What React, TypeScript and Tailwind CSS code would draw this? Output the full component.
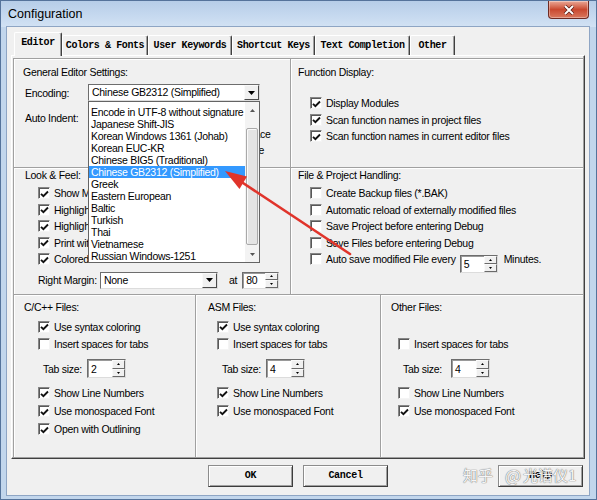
import clsx from "clsx";
import type { ReactNode } from "react";

const ENCODINGS = [
  "Encode in UTF-8 without signature",
  "Japanese Shift-JIS",
  "Korean Windows 1361 (Johab)",
  "Korean EUC-KR",
  "Chinese BIG5 (Traditional)",
  "Chinese GB2312 (Simplified)",
  "Greek",
  "Eastern European",
  "Baltic",
  "Turkish",
  "Thai",
  "Vietnamese",
  "Russian Windows-1251",
];

const TABS = [
  { name: "Editor", w: "w-[48px]" },
  { name: "Colors & Fonts", w: "w-[86px]" },
  { name: "User Keywords", w: "w-[84px]" },
  { name: "Shortcut Keys", w: "w-[83px]" },
  { name: "Text Completion", w: "w-[95px]" },
  { name: "Other", w: "w-[45px]" },
];

function Box({ checked }: { checked?: boolean }) {
  return (
    <span className="flex h-[12px] w-[12px] shrink-0 items-center justify-center border border-t-[#868686] border-l-[#868686] border-r-[#f4f4f4] border-b-[#f4f4f4] bg-white shadow-[inset_1px_1px_0_#585858]">
      {checked && (
        <svg width="9" height="8" viewBox="0 0 9 8" className="ml-[1px] mt-[1px]">
          <path d="M1 3.8 L3.4 6.2 L8 1.5" fill="none" stroke="#111" strokeWidth="1.9" />
        </svg>
      )}
    </span>
  );
}

function Check({
  label,
  checked,
  className,
  children,
}: {
  label: string;
  checked?: boolean;
  className?: string;
  children?: ReactNode;
}) {
  return (
    <div className={clsx("flex items-center", className)}>
      <Box checked={checked} />
      <span className="ml-[4px] whitespace-nowrap">{label}</span>
      {children}
    </div>
  );
}

function DownTri() {
  return (
    <svg width="7" height="4" viewBox="0 0 7 4">
      <path d="M0 0H7L3.5 4Z" fill="#000" />
    </svg>
  );
}

function Combo({ value, className, children }: { value: string; className?: string; children?: ReactNode }) {
  return (
    <div className={clsx("relative flex h-[17px] border border-t-[#6d6d6d] border-l-[#6d6d6d] border-r-[#dcdcdc] border-b-[#dcdcdc] bg-white", className)}>
      <span className="flex-1 overflow-hidden whitespace-nowrap pl-[3px] leading-[15px]">{value}</span>
      <span className="flex w-[15px] items-center justify-center border border-t-[#fafafa] border-l-[#fafafa] border-r-[#4a4a4a] border-b-[#4a4a4a] bg-[#f0f0f0]">
        <DownTri />
      </span>
      {children}
    </div>
  );
}

function Spin({ value, className }: { value: string; className?: string }) {
  return (
    <div className={clsx("flex border border-t-[#6d6d6d] border-l-[#6d6d6d] border-r-[#dcdcdc] border-b-[#dcdcdc] bg-white shadow-[inset_1px_1px_0_#9a9a9a]", className)}>
      <span className="flex flex-1 items-center pl-[3px]">{value}</span>
      <div className="flex w-[13px] flex-col">
        <span className="flex flex-1 items-center justify-center border border-t-[#fafafa] border-l-[#fafafa] border-r-[#6a6a6a] border-b-[#6a6a6a] bg-[#f0f0f0]">
          <svg width="3" height="2" viewBox="0 0 3 2">
            <path d="M0 2H3L1.5 0Z" fill="#000" />
          </svg>
        </span>
        <span className="flex flex-1 items-center justify-center border border-t-[#fafafa] border-l-[#fafafa] border-r-[#6a6a6a] border-b-[#6a6a6a] bg-[#f0f0f0]">
          <svg width="3" height="2" viewBox="0 0 3 2">
            <path d="M0 0H3L1.5 2Z" fill="#000" />
          </svg>
        </span>
      </div>
    </div>
  );
}

function EncodingList() {
  return (
    <div className="absolute left-[-1px] top-[16px] z-20 flex h-[162px] w-[172px] border border-[#646464] bg-white">
      <div className="flex-1 pt-[4px]">
        {ENCODINGS.map((e) => (
          <div
            key={e}
            className={clsx(
              "h-[12px] whitespace-nowrap pl-[2px] leading-[12px]",
              e === "Chinese GB2312 (Simplified)" && "bg-[#3399ff] text-white"
            )}
          >
            {e}
          </div>
        ))}
      </div>
      <div className="flex w-[14px] flex-col bg-[#f3f3f3]">
        <span className="flex h-[16px] items-center justify-center">
          <svg width="5" height="3" viewBox="0 0 5 3">
            <path d="M0 3H5L2.5 0Z" fill="#555" />
          </svg>
        </span>
        <div className="flex-1">
          <div className="mx-[1px] mt-[10px] h-[117px] rounded-[2px] border border-[#a9a9a9] bg-[#e4e4e4] shadow-[inset_1px_1px_0_#fafafa]" />
        </div>
        <span className="flex h-[16px] items-center justify-center">
          <svg width="5" height="3" viewBox="0 0 5 3">
            <path d="M0 0H5L2.5 3Z" fill="#555" />
          </svg>
        </span>
      </div>
    </div>
  );
}

function Button({ label, className }: { label: string; className?: string }) {
  return (
    <div
      className={clsx(
        "flex h-[22px] w-[85px] items-center justify-center border border-t-[#8c8c8c] border-l-[#8c8c8c] border-r-[#3c3c3c] border-b-[#3c3c3c] bg-[#f0f0f0] font-['Liberation_Mono',monospace] text-[10px] font-bold tracking-[-0.3px] shadow-[inset_1px_1px_0_#fff,inset_-1px_-1px_0_#a0a0a0]",
        className
      )}
    >
      {label}
    </div>
  );
}

export default function App() {
  return (
    <div className="relative h-[500px] w-[597px] overflow-hidden border border-[#55739b] bg-[#c2d6ec] font-['Liberation_Sans',Arial,sans-serif] text-[10.5px] leading-[12px] tracking-[-0.28px] text-black">
      {/* title bar */}
      <div className="flex h-[26px] bg-gradient-to-b from-[#b6cde8] to-[#d2e2f4]">
        <span className="self-center pl-[7px] text-[12.5px] tracking-normal">Configuration</span>
        <div className="ml-auto mr-[7px] flex h-[18px] w-[41px] items-center justify-center rounded-b-[4px] border border-t-0 border-[#6e2a22] bg-gradient-to-b from-[#e9a897] via-[#c9482f] to-[#d9775d] shadow-[inset_0_0_0_1px_rgba(255,255,255,0.35)]">
          <svg width="12" height="10" viewBox="0 0 12 10">
            <path d="M2 1 L10 9 M10 1 L2 9" stroke="#5a1a12" strokeWidth="3.4" />
            <path d="M2 1 L10 9 M10 1 L2 9" stroke="#fff" strokeWidth="2" />
          </svg>
        </div>
      </div>

      {/* client area */}
      <div className="ml-[6px] flex h-[468px] w-[582px] flex-col bg-[#f0f0f0] shadow-[0_0_0_1px_#8ea5c4]">
        {/* tabs */}
        <div className="flex h-[28px] items-end pl-[7px] font-['Liberation_Mono',monospace] text-[10px] font-bold tracking-[-0.4px]">
          {TABS.map((t, i) => (
            <div
              key={t.name}
              className={clsx(
                "flex items-center justify-center rounded-t-[2px] border-t border-l border-r border-t-white border-l-white border-r-[#404040] bg-[#f0f0f0] shadow-[inset_-1px_0_0_#a0a0a0]",
                t.w,
                i === 0 ? "relative z-10 -mb-px h-[24px] pb-[3px]" : "h-[20px] pt-[1px]"
              )}
            >
              {t.name}
            </div>
          ))}
        </div>

        {/* tab panel */}
        <div className="ml-[4px] h-[404px] w-[574px] border border-t-white border-l-white border-r-[#404040] border-b-[#404040] pl-[1px] pt-[2px] shadow-[inset_-1px_-1px_0_#a0a0a0]">
          <div className="flex w-[571px] flex-col border-t border-l border-[#a0a0a0]">
            {/* row 1 */}
            <div className="flex h-[109px]">
              <div className="w-[277px] border-r border-b border-[#a0a0a0] pl-[9px] pt-[7px] shadow-[inset_1px_1px_0_#fff]">
                <div>General Editor Settings:</div>
                <div className="mt-[6px] flex items-center pl-[2px]">
                  <span className="w-[63px]">Encoding:</span>
                  <Combo value="Chinese GB2312 (Simplified)" className="w-[172px]">
                    <EncodingList />
                  </Combo>
                </div>
                <div className="mt-[9px] flex">
                  <div className="flex h-[16px] w-[151px] items-center pl-[2px]">
                    <span className="w-[63px]">Auto Indent:</span>
                    <Combo value="Smart" className="w-[72px]" />
                  </div>
                  <div className="flex flex-col">
                    <Check className="h-[16px]" label="Virtual Spaces" />
                    <Check className="h-[16px]" label="View White Space" />
                    <Check className="h-[16px]" label="View End of Line" />
                  </div>
                </div>
              </div>
              <div className="flex-1 border-r border-b border-[#a0a0a0] pl-[7px] pt-[7px] shadow-[inset_1px_1px_0_#fff]">
                <div>Function Display:</div>
                <div className="mt-[17px] flex flex-col pl-[12px]">
                  <Check className="h-[16.5px]" checked label="Display Modules" />
                  <Check className="h-[16.5px]" checked label="Scan function names in project files" />
                  <Check className="h-[16.5px]" checked label="Scan function names in current editor files" />
                </div>
              </div>
            </div>

            {/* row 2 */}
            <div className="flex h-[127px]">
              <div className="w-[277px] border-r border-b border-[#a0a0a0] pl-[11px] pt-[1px] shadow-[inset_1px_1px_0_#fff]">
                <div>Look &amp; Feel:</div>
                <div className="mt-[4px] flex flex-col pl-[13px]">
                  <Check className="h-[16.5px]" checked label="Show Message Dialogs" />
                  <Check className="h-[16.5px]" checked label="Highlight Current Line" />
                  <Check className="h-[16.5px]" checked label="Highlight matching Braces" />
                  <Check className="h-[16.5px]" checked label="Print with syntax coloring" />
                  <Check className="h-[16.5px]" checked label="Colored Editor Tabs" />
                </div>
                <div className="mt-[4px] flex h-[17px] items-center pl-[13px]">
                  <span className="w-[62px]">Right Margin:</span>
                  <Combo value="None" className="w-[118px]" />
                  <span className="ml-[11px]">at</span>
                  <Spin value="80" className="ml-[5px] h-[17px] w-[37px]" />
                </div>
              </div>
              <div className="flex-1 border-r border-b border-[#a0a0a0] pl-[7px] pt-[1px] shadow-[inset_1px_1px_0_#fff]">
                <div>File &amp; Project Handling:</div>
                <div className="mt-[4px] flex flex-col pl-[12px]">
                  <Check className="h-[16.5px]" label="Create Backup files (*.BAK)" />
                  <Check className="h-[16.5px]" label="Automatic reload of externally modified files" />
                  <Check className="h-[16.5px]" label="Save Project before entering Debug" />
                  <Check className="h-[16.5px]" label="Save Files before entering Debug" />
                  <Check className="h-[16.5px]" label="Auto save modified File every">
                    <Spin value="5" className="ml-[4px] mt-[4px] h-[18px] w-[38px] self-start" />
                    <span className="ml-[6px]">Minutes.</span>
                  </Check>
                </div>
              </div>
            </div>

            {/* row 3 */}
            <div className="flex h-[163px]">
              <div className="w-[182px] border-r border-b border-[#a0a0a0] pl-[10px] pt-[6px] shadow-[inset_1px_1px_0_#fff]">
                <div>C/C++ Files:</div>
                <div className="mt-[5px] flex flex-col pl-[14px]">
                  <Check className="h-[17px]" checked label="Use syntax coloring" />
                  <Check className="h-[17px]" label="Insert spaces for tabs" />
                </div>
                <div className="mt-[7px] flex h-[19px] items-center pl-[19px]">
                  <span>Tab size:</span>
                  <Spin value="2" className="ml-[5px] h-[19px] w-[39px]" />
                </div>
                <div className="mt-[6px] flex flex-col pl-[14px]">
                  <Check className="h-[18px]" checked label="Show Line Numbers" />
                  <Check className="h-[18px]" checked label="Use monospaced Font" />
                  <Check className="h-[18px]" checked label="Open with Outlining" />
                </div>
              </div>
              <div className="w-[185px] border-r border-b border-[#a0a0a0] pl-[12px] pt-[6px] shadow-[inset_1px_1px_0_#fff]">
                <div>ASM Files:</div>
                <div className="mt-[5px] flex flex-col pl-[9px]">
                  <Check className="h-[17px]" checked label="Use syntax coloring" />
                  <Check className="h-[17px]" label="Insert spaces for tabs" />
                </div>
                <div className="mt-[7px] flex h-[19px] items-center pl-[14px]">
                  <span>Tab size:</span>
                  <Spin value="4" className="ml-[5px] h-[19px] w-[39px]" />
                </div>
                <div className="mt-[6px] flex flex-col pl-[9px]">
                  <Check className="h-[18px]" checked label="Show Line Numbers" />
                  <Check className="h-[18px]" checked label="Use monospaced Font" />
                </div>
              </div>
              <div className="flex-1 border-r border-b border-[#a0a0a0] pl-[10px] pt-[6px] shadow-[inset_1px_1px_0_#fff]">
                <div>Other Files:</div>
                <div className="mt-[5px] flex flex-col pl-[7px]">
                  <div className="h-[17px]" />
                  <Check className="h-[17px]" label="Insert spaces for tabs" />
                </div>
                <div className="mt-[7px] flex h-[19px] items-center pl-[12px]">
                  <span>Tab size:</span>
                  <Spin value="4" className="ml-[9px] h-[19px] w-[39px]" />
                </div>
                <div className="mt-[6px] flex flex-col pl-[7px]">
                  <Check className="h-[18px]" label="Show Line Numbers" />
                  <Check className="h-[18px]" checked label="Use monospaced Font" />
                </div>
              </div>
            </div>
          </div>
        </div>

        {/* buttons */}
        <div className="mt-[6px] flex pl-[201px]">
          <Button label="OK" />
          <Button label="Cancel" className="ml-[10px]" />
          <Button label="Help" className="ml-[110px]" />
        </div>
      </div>

      {/* red annotation arrow */}
      <svg className="pointer-events-none absolute left-[-1px] top-[-1px] z-30" width="597" height="500" viewBox="0 0 597 500">
        <path d="M240 181 L350 254" stroke="#e0342b" strokeWidth="2.6" strokeLinecap="round" />
        <path d="M225 171 L247 176.5 L239.5 189 Z" fill="#e0342b" />
      </svg>

      {/* watermark */}
      <div className="pointer-events-none absolute left-[462px] top-[464px] z-30 flex items-center font-['Noto_Sans_CJK_SC',sans-serif] text-[15px] leading-[20px] tracking-normal text-[#f7f7f7] opacity-90 [text-shadow:0_0_1px_#6a6a6a,0_0_1px_#6a6a6a]">
        <span>知乎</span>
        <span className="ml-[12px] text-[17px]">@</span>
        <span className="ml-[2px]">光谱仪1</span>
      </div>
    </div>
  );
}
